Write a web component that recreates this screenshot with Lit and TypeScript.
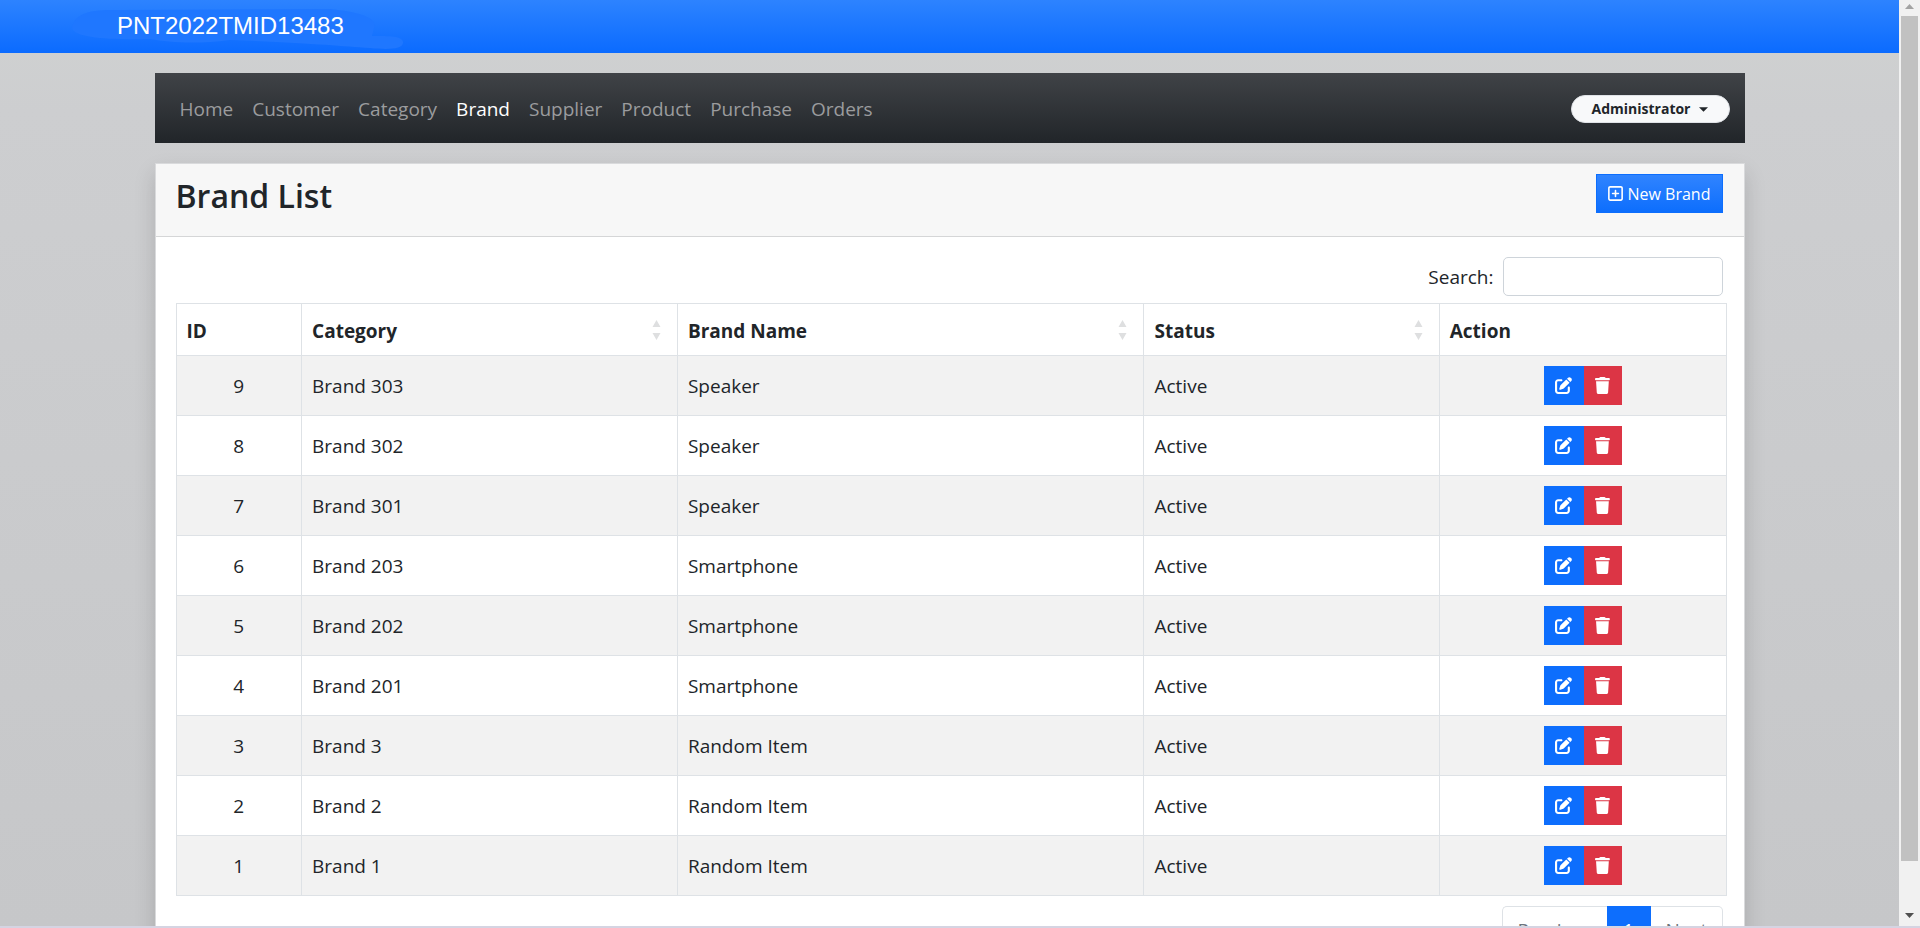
import { LitElement, html, css, svg } from "lit";
import { customElement, state } from "lit/decorators.js";

interface Brand {
  id: number;
  category: string;
  name: string;
  status: string;
}

const BRANDS: Brand[] = [
  { id: 9, category: "Brand 303", name: "Speaker", status: "Active" },
  { id: 8, category: "Brand 302", name: "Speaker", status: "Active" },
  { id: 7, category: "Brand 301", name: "Speaker", status: "Active" },
  { id: 6, category: "Brand 203", name: "Smartphone", status: "Active" },
  { id: 5, category: "Brand 202", name: "Smartphone", status: "Active" },
  { id: 4, category: "Brand 201", name: "Smartphone", status: "Active" },
  { id: 3, category: "Brand 3", name: "Random Item", status: "Active" },
  { id: 2, category: "Brand 2", name: "Random Item", status: "Active" },
  { id: 1, category: "Brand 1", name: "Random Item", status: "Active" },
];

const MENU = ["Home", "Customer", "Category", "Brand", "Supplier", "Product", "Purchase", "Orders"];

const plusSquare = svg`<path d="M64 80c-8.800 0-16 7.200-16 16V416c0 8.800 7.200 16 16 16H384c8.800 0 16-7.200 16-16V96c0-8.800-7.200-16-16-16H64zM0 96C0 60.700 28.700 32 64 32H384c35.300 0 64 28.700 64 64V416c0 35.300-28.700 64-64 64H64c-35.300 0-64-28.700-64-64V96zM200 344V280H136c-13.300 0-24-10.700-24-24s10.700-24 24-24h64V168c0-13.300 10.700-24 24-24s24 10.700 24 24v64h64c13.300 0 24 10.700 24 24s-10.700 24-24 24H248v64c0 13.300-10.700 24-24 24s-24-10.700-24-24z"/>`;

const penSquare = svg`<path d="M471.600 21.700c-21.900-21.900-57.300-21.900-79.200 0L362.300 51.700l97.900 97.900 30.100-30.100c21.900-21.900 21.900-57.300 0-79.200L471.600 21.700zm-299.200 220c-6.100 6.100-10.800 13.600-13.500 21.900l-29.600 88.800c-2.900 8.600-.6 18.100 5.800 24.600s15.900 8.700 24.600 5.800l88.800-29.600c8.200-2.700 15.700-7.400 21.900-13.500L437.700 172.300 339.700 74.300 172.400 241.700zM96 64C43 64 0 107 0 160V416c0 53 43 96 96 96H352c53 0 96-43 96-96V320c0-17.700-14.300-32-32-32s-32 14.300-32 32v96c0 17.700-14.300 32-32 32H96c-17.700 0-32-14.300-32-32V160c0-17.700 14.300-32 32-32h96c17.700 0 32-14.300 32-32s-14.300-32-32-32H96z"/>`;

const trash = svg`<path d="M135.200 17.700L128 32H32C14.300 32 0 46.300 0 64S14.300 96 32 96H416c17.700 0 32-14.300 32-32s-14.300-32-32-32H320l-7.200-14.300C307.400 6.800 296.300 0 284.200 0H163.800c-12.100 0-23.200 6.800-28.600 17.700zM416 128H32L53.200 467c1.600 25.300 22.600 45 47.900 45H346.900c25.300 0 46.300-19.700 47.900-45L416 128z"/>`;

@customElement("app-root")
export class AppRoot extends LitElement {
  @state() private query = "";

  static styles = css`
    :host {
      display: flex;
      flex-direction: column;
      height: 100vh;
      color: #212529;
      font-family: "Open Sans", "Noto Sans", sans-serif;
      font-size: 19px;
      line-height: 30px;
    }
    * { box-sizing: border-box; }
    a { color: inherit; text-decoration: none; }
    button, input { font: inherit; margin: 0; }
    button { cursor: pointer; border: 0; padding: 0; }
    .window { display: flex; flex: 1; min-height: 0; }
    .page {
      flex: 1;
      min-width: 0;
      overflow-y: auto;
      scrollbar-width: none;
      background: linear-gradient(#d0d2d1, #cdced0 12%, #c6c7c9);
    }
    .edge { height: 2px; background: #d5d4e2; }

    .topbar {
      position: relative;
      height: 53px;
      padding: 0 117px 2px;
      display: flex;
      align-items: center;
      background: linear-gradient(#2d83ff, #0b6bff);
      color: #fff;
      font-family: "Liberation Sans", Arial, sans-serif;
      font-size: 24px;
    }
    .smudge { position: absolute; left: 60px; top: 0; fill: #1f77ff; }
    .team { position: relative; }

    .container { margin: 0 auto; padding: 20px 0 40px; width: calc(100% - 309px); }
    .nav {
      display: flex;
      align-items: center;
      height: 70px;
      padding: 2px 15px 0 16px;
      background: linear-gradient(#404347, #212529);
    }
    .menu { display: flex; flex: 1; margin: 0; padding: 0; list-style: none; }
    .menu a { display: block; padding: 0 10px 0 9px; color: #9b9c9e; }
    .menu .current { color: #fff; }
    .user {
      display: flex;
      align-items: center;
      justify-content: center;
      gap: 9px;
      width: 159px;
      height: 28px;
      border: 1px solid #dfe2e6;
      border-radius: 14px;
      background: #f8f9fa;
      color: #212529;
      font-size: 14px;
      font-weight: 700;
      line-height: 20px;
    }
    .caret { width: 9px; height: 5px; fill: currentColor; }

    .card {
      margin-top: 20px;
      border: 1px solid #d9dadc;
      background: #fff;
      box-shadow: 0 10px 20px rgba(0, 0, 0, 0.15);
    }
    .card-head {
      display: flex;
      justify-content: space-between;
      align-items: flex-start;
      height: 73px;
      padding: 10px 21px 10px 20px;
      background: #f7f7f7;
      border-bottom: 1px solid #d5d6d7;
    }
    .title { margin: 0; font-size: 32px; line-height: 44px; font-weight: 600; }
    .new {
      display: flex;
      align-items: center;
      justify-content: center;
      gap: 5px;
      width: 127px;
      height: 39px;
      border: 1px solid #0d6efd;
      background: linear-gradient(#3084ff, #0d6efd);
      color: #fff;
      font-size: 16px;
    }
    .new svg { width: 15px; height: 17px; fill: currentColor; }
    .card-body { padding: 20px 21px 20px 20px; }
    .search { display: flex; justify-content: flex-end; align-items: center; gap: 9px; }
    .search input {
      width: 220px;
      height: 39px;
      padding: 0 10px;
      border: 1px solid #ced4da;
      border-radius: 5px;
      background: #fff;
      color: inherit;
    }
    .table-wrap { margin: 7px -4px 10px 0; }
    .brands { width: 100%; table-layout: fixed; border-collapse: collapse; }
    .brands th, .brands td { border: 1px solid #dee2e6; padding: 0 10px; text-align: left; }
    .brands th { height: 52px; padding-top: 2px; font-weight: 700; }
    .brands td { height: 60px; }
    .brands tbody tr:nth-child(odd) { background: #f2f2f2; }
    .brands .mid { text-align: center; }
    .c-id { width: 8.1%; }
    .c-category { width: 24.25%; }
    .c-name { width: 30.1%; }
    .c-status { width: 19.05%; }
    .head { display: flex; align-items: center; justify-content: space-between; }
    .sort { width: 9px; height: 20px; margin: 0 6px 2px 0; fill: #dedfe0; }
    .actions { display: flex; justify-content: center; }
    .action { display: grid; place-items: center; height: 39px; color: #fff; }
    .action svg { height: 17px; fill: currentColor; }
    .edit { width: 40px; background: #0d6efd; }
    .remove { width: 38px; background: #dc3545; }

    .pager { display: flex; justify-content: flex-end; }
    .pager button {
      height: 48px;
      padding: 0 15px;
      border: 1px solid #dee2e6;
      background: #fff;
      color: #6c757d;
    }
    .pager .prev { width: 105px; border-right: 0; border-radius: 5px 0 0 5px; }
    .pager .num { width: 44px; padding: 0; border-color: #0d6efd; background: #0d6efd; color: #fff; }
    .pager .next { width: 72px; border-left: 0; border-radius: 0 5px 5px 0; }

    .scroll {
      display: flex;
      flex-direction: column;
      width: 21px;
      padding: 0 2px;
      background: #f1f1f1;
    }
    .arrow { width: 17px; height: 16px; fill: #a3a3a3; }
    .arrow.down { height: 21px; fill: #505050; }
    .track { flex: 1; }
    .thumb { height: 95%; background: #c1c1c1; }
  `;

  private get rows() {
    const q = this.query.toLowerCase();
    return BRANDS.filter((b) => `${b.id} ${b.category} ${b.name} ${b.status}`.toLowerCase().includes(q));
  }

  private heading(label: string) {
    return html`<span class="head">${label}
      <svg class="sort" viewBox="0 0 9 20" aria-hidden="true"><path d="M4.500 0l4 7h-8zM4.500 20l4-7h-8z"/></svg>
    </span>`;
  }

  render() {
    return html`
      <div class="window">
        <div class="page">
          <header class="topbar">
            <svg class="smudge" width="350" height="53" viewBox="0 0 350 53" aria-hidden="true">
              <path d="M12 28C14 14 28 9 60 10L270 9C300 12 318 18 314 28L312 36C330 36 344 36 343 43C342 49 330 50 310 48C280 46 250 43 170 40C140 44 110 43 90 39C50 40 14 38 12 28Z"/>
            </svg>
            <span class="team">PNT2022TMID13483</span>
          </header>
          <main class="container">
            <nav class="nav">
              <ul class="menu">
                ${MENU.map((m) => html`<li><a href="#" class=${m === "Brand" ? "current" : ""}>${m}</a></li>`)}
              </ul>
              <button class="user" type="button">Administrator
                <svg class="caret" viewBox="0 0 10 5" aria-hidden="true"><path d="M0 0h10L5 5z"/></svg>
              </button>
            </nav>
            <section class="card">
              <div class="card-head">
                <h3 class="title">Brand List</h3>
                <button class="new" type="button">
                  <svg viewBox="0 0 448 512" aria-hidden="true">${plusSquare}</svg>New Brand
                </button>
              </div>
              <div class="card-body">
                <div class="search">
                  <label for="search">Search:</label>
                  <input id="search" type="search" .value=${this.query}
                    @input=${(e: Event) => (this.query = (e.target as HTMLInputElement).value)} />
                </div>
                <div class="table-wrap">
                  <table class="brands">
                    <colgroup>
                      <col class="c-id" /><col class="c-category" /><col class="c-name" /><col class="c-status" /><col />
                    </colgroup>
                    <thead>
                      <tr>
                        <th>ID</th>
                        <th>${this.heading("Category")}</th>
                        <th>${this.heading("Brand Name")}</th>
                        <th>${this.heading("Status")}</th>
                        <th>Action</th>
                      </tr>
                    </thead>
                    <tbody>
                      ${this.rows.map((b) => html`
                        <tr>
                          <td class="mid">${b.id}</td>
                          <td>${b.category}</td>
                          <td>${b.name}</td>
                          <td>${b.status}</td>
                          <td>
                            <div class="actions">
                              <button class="action edit" type="button" aria-label="Edit">
                                <svg viewBox="0 0 512 512" aria-hidden="true">${penSquare}</svg>
                              </button>
                              <button class="action remove" type="button" aria-label="Delete">
                                <svg viewBox="0 0 448 512" aria-hidden="true">${trash}</svg>
                              </button>
                            </div>
                          </td>
                        </tr>`)}
                    </tbody>
                  </table>
                </div>
                <div class="pager">
                  <button class="prev" type="button">Previous</button>
                  <button class="num" type="button">1</button>
                  <button class="next" type="button">Next</button>
                </div>
              </div>
            </section>
          </main>
        </div>
        <div class="scroll" aria-hidden="true">
          <svg class="arrow" viewBox="0 0 17 16"><path d="M8.500 4l4.500 5h-9z"/></svg>
          <div class="track"><div class="thumb"></div></div>
          <svg class="arrow down" viewBox="0 0 17 21"><path d="M8.500 13l4.500-5h-9z"/></svg>
        </div>
      </div>
      <div class="edge"></div>
    `;
  }
}
